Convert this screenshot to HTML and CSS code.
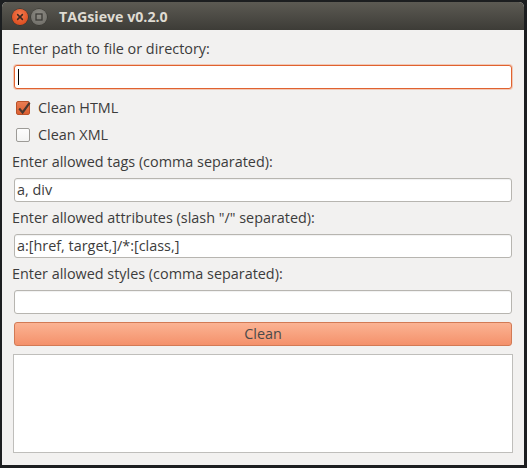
FILE: index.html
```html
<!DOCTYPE html>
<html>
<head>
<meta charset="utf-8">
<link rel="stylesheet" href="styles.css">
</head>
<body>
<div class="window">
  <div class="titlebar">
    <div class="wbtn close">
      <svg width="16" height="16" viewBox="0 0 16 16"><path d="M5.6 5.6 L10.4 10.4 M10.4 5.6 L5.6 10.4" stroke="#3b2a22" stroke-width="1.5" stroke-linecap="round"/></svg>
    </div>
    <div class="wbtn min">
      <svg width="16" height="16" viewBox="0 0 16 16"><rect x="5" y="5" width="6" height="6" fill="none" stroke="#3c3b37" stroke-width="1.3"/></svg>
    </div>
    <div class="title">TAGsieve v0.2.0</div>
  </div>
  <div class="content">
    <div class="label first">Enter path to file or directory:</div>
    <div class="entry focus"><span class="cursor"></span></div>
    <div class="checks">
      <div class="check-row">
        <span class="box checked">
          <svg width="16" height="16" viewBox="0 0 16 16"><path d="M3.2 7.6 L6.6 11.4 L13.6 1.8" fill="none" stroke="#4a3830" stroke-width="2.2" stroke-linejoin="miter"/></svg>
        </span>
        <span class="check-text">Clean HTML</span>
      </div>
      <div class="check-row">
        <span class="box"></span>
        <span class="check-text">Clean XML</span>
      </div>
    </div>
    <div class="label">Enter allowed tags (comma separated):</div>
    <div class="entry">a, div</div>
    <div class="label">Enter allowed attributes (slash "/" separated):</div>
    <div class="entry">a:[href, target,]/*:[class,]</div>
    <div class="label">Enter allowed styles (comma separated):</div>
    <div class="entry"></div>
    <div class="button">Clean</div>
    <div class="textview"></div>
  </div>
</div>
</body>
</html>
```
FILE: styles.css
```css
html, body {
  margin: 0;
  padding: 0;
}
body {
  background: #1c1e20;
  width: 527px;
  height: 468px;
  overflow: hidden;
  font-family: "Open Sans", "DejaVu Sans", sans-serif;
  font-size: 14.4px;
  color: #3c3c3c;
}
.window {
  margin: 2px 0 0 2px;
  width: 522px;
  height: 463px;
  display: flex;
  flex-direction: column;
  background: #f2f1f0;
  border-radius: 5px 5px 0 0;
  overflow: hidden;
}
.titlebar {
  height: 28px;
  flex: none;
  display: flex;
  align-items: center;
  background: linear-gradient(#5c5a53, #3d3c37);
  padding-left: 8px;
  box-sizing: border-box;
}
.wbtn {
  width: 16px;
  height: 16px;
  border-radius: 50%;
  margin-top: 2px;
  display: flex;
  align-items: center;
  justify-content: center;
  box-sizing: border-box;
}
.close {
  margin-left: 2px;
  background: radial-gradient(circle at 50% 35%, #f47b50, #df5224 70%, #c9441a);
  box-shadow: 0 0 0 0.5px #3a2a22;
}
.min {
  margin-left: 3px;
  background: radial-gradient(circle at 50% 35%, #8e8c85, #75736d 70%, #66645e);
  box-shadow: 0 0 0 0.5px #33322e;
}
.title {
  margin-left: 12px;
  margin-top: 1px;
  font-weight: bold;
  font-size: 14.2px;
  color: #dfdbd2;
}
.content {
  flex: 1;
  display: flex;
  flex-direction: column;
  padding: 0 10px 12px 10px;
}
.label {
  line-height: 20px;
  height: 20px;
  margin-top: 6px;
  white-space: nowrap;
}
.label.first {
  margin-top: 9px;
}
.entry {
  margin: 6px 2px 0 2px;
  height: 24px;
  box-sizing: border-box;
  border: 1px solid #b7b5b0;
  border-radius: 3px;
  background: #fff;
  padding: 0 2px;
  line-height: 22px;
  white-space: nowrap;
  box-shadow: inset 0 1px 1px rgba(0,0,0,0.06);
}
.entry.focus {
  border-color: #e0622f;
  box-shadow: 0 0 0 1px rgba(240,150,110,0.45);
  display: flex;
  align-items: center;
}
.cursor {
  display: block;
  width: 1px;
  height: 16px;
  background: #000;
  margin-left: 1px;
}
.checks {
  margin-top: 5px;
  display: flex;
  flex-direction: column;
}
.check-row {
  height: 27px;
  display: flex;
  align-items: center;
  padding-left: 4px;
}
.box {
  width: 14px;
  height: 14px;
  box-sizing: border-box;
  border: 1px solid #9d9b97;
  border-radius: 2px;
  background: linear-gradient(#fdfdfd, #f4f4f3);
  position: relative;
  flex: none;
}
.box.checked {
  background: linear-gradient(#e97c52, #dc6032);
  border-color: #b9522a;
}
.box svg {
  position: absolute;
  left: -1px;
  top: -1px;
}
.check-text {
  margin-left: 8px;
  white-space: nowrap;
}
.checks + .label {
  margin-top: 4px;
}
.button {
  margin: 8px 2px 0 2px;
  height: 24px;
  box-sizing: border-box;
  border: 1px solid #d27a55;
  border-radius: 3px;
  background: linear-gradient(#fbb393, #f4916b);
  text-align: center;
  line-height: 22px;
  color: #4a4a4a;
}
.textview {
  margin: 8px 1px 0 1px;
  flex: 1;
  background: #fff;
  border: 1px solid #bfbebb;
}
```
